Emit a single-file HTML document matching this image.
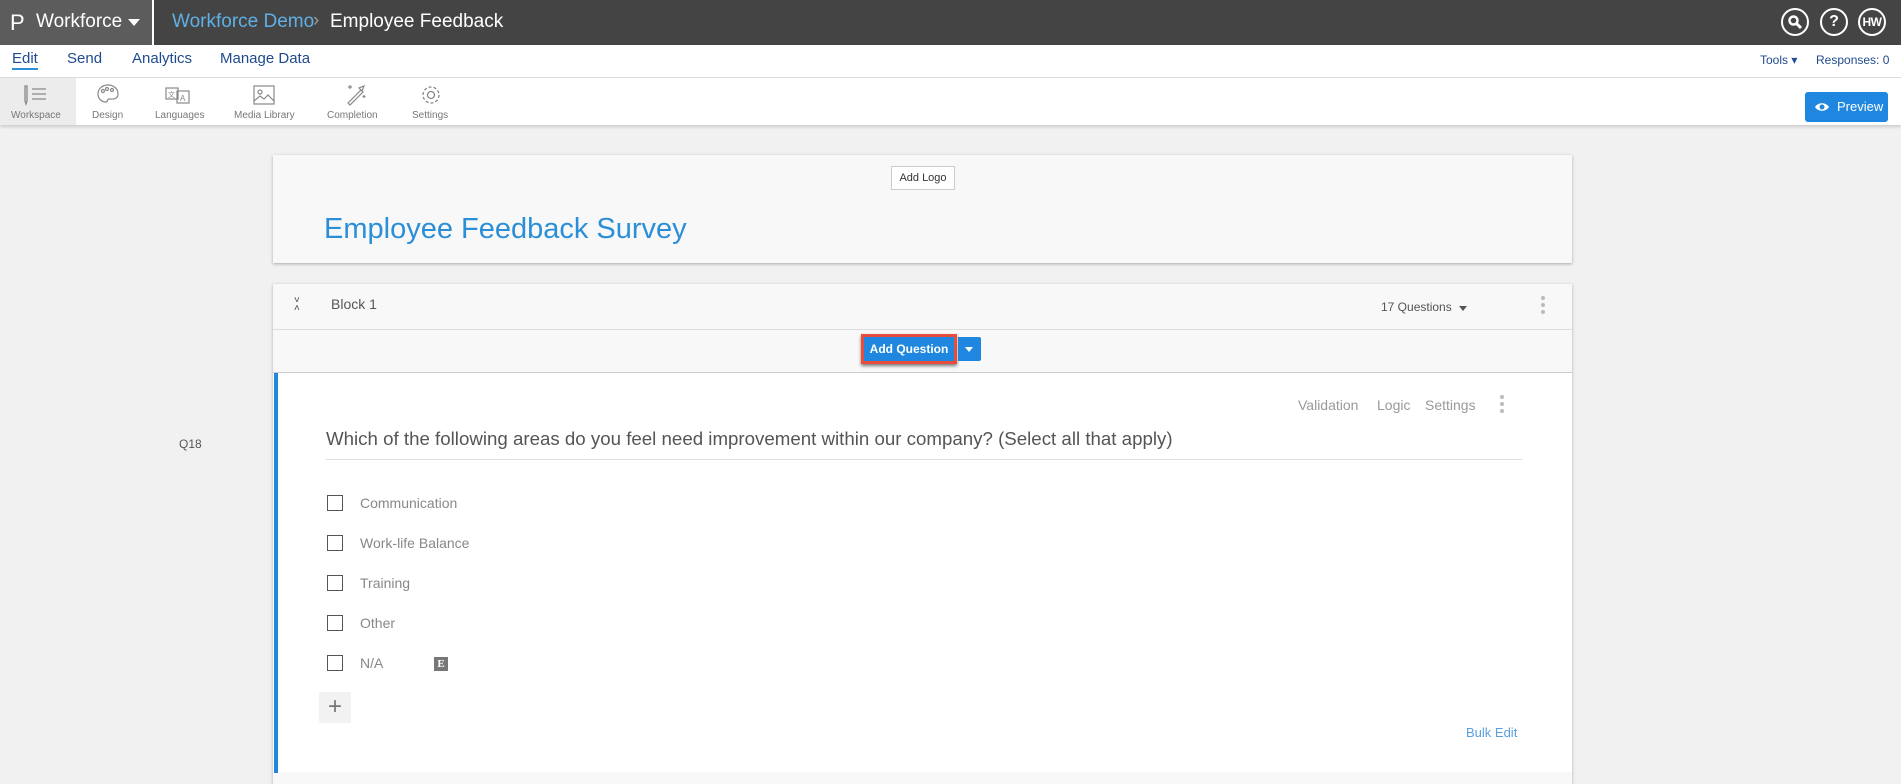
<!DOCTYPE html>
<html><head><meta charset="utf-8"><style>
*{margin:0;padding:0;box-sizing:border-box}
body{width:1901px;height:764px;overflow:hidden;background:#f1f1f1;font-family:"Liberation Sans",sans-serif;position:relative}
.a{position:absolute;white-space:nowrap}
</style></head><body>
<!-- top bar -->
<div class="a" style="left:0;top:0;width:1901px;height:45px;background:#444"></div>
<div class="a" style="left:0;top:0;width:154px;height:45px;background:#5c5c5c;border-right:2px solid #fff"></div>
<div class="a" style="left:10px;top:10px;font-size:22px;color:#fff">P</div>
<div class="a" style="left:36px;top:11px;font-size:19px;color:#fff">Workforce</div>
<div class="a" style="left:128px;top:19px;width:0;height:0;border-left:6px solid transparent;border-right:6px solid transparent;border-top:7px solid #fff"></div>
<div class="a" style="left:172px;top:11px;font-size:19px;color:#5fb0e6">Workforce Demo</div>
<div class="a" style="left:313px;top:10px;font-size:19px;color:#999">›</div>
<div class="a" style="left:330px;top:11px;font-size:19px;color:#fff">Employee Feedback</div>
<div class="a" style="left:1781px;top:8px;width:28px;height:28px;border:2px solid #fff;border-radius:50%"></div>
<svg class="a" style="left:1787px;top:14px" width="16" height="16"><circle cx="6.5" cy="6.5" r="4" stroke="#fff" stroke-width="2.5" fill="none"/><path d="M9.5 9.5 L14 14" stroke="#fff" stroke-width="3"/></svg>
<div class="a" style="left:1820px;top:8px;width:28px;height:28px;border:2px solid #fff;border-radius:50%;color:#fff;font-weight:bold;font-size:16px;text-align:center;line-height:24px">?</div>
<div class="a" style="left:1858px;top:8px;width:28px;height:28px;border:2px solid #fff;border-radius:50%;color:#fff;font-weight:bold;font-size:12px;text-align:center;line-height:24px;letter-spacing:-0.5px">HW</div>
<!-- nav -->
<div class="a" style="left:0;top:45px;width:1901px;height:33px;background:#fff;border-bottom:1px solid #ddd"></div>
<div class="a" style="left:12px;top:50px;font-size:15px;color:#1f4a8f;border-bottom:2px solid #2b8fd8;padding-bottom:1px">Edit</div>
<div class="a" style="left:67px;top:50px;font-size:15px;color:#1f4a8f">Send</div>
<div class="a" style="left:132px;top:50px;font-size:15px;color:#1f4a8f">Analytics</div>
<div class="a" style="left:220px;top:50px;font-size:15px;color:#1f4a8f">Manage Data</div>
<div class="a" style="left:1760px;top:53px;font-size:12px;color:#1f4a8f">Tools ▾</div>
<div class="a" style="left:1816px;top:53px;font-size:12px;color:#1f4a8f">Responses: 0</div>
<!-- toolbar -->
<div class="a" style="left:0;top:78px;width:1901px;height:47px;background:#fff;box-shadow:0 2px 3px rgba(0,0,0,.15)"></div>
<div class="a" style="left:0;top:78px;width:76px;height:47px;background:#ececec"></div>
<svg class="a" style="left:22px;top:84px" width="28" height="22" stroke="#888" fill="none" stroke-width="1.3"><path d="M3 2v15l1 3 1-3V2z M10 5h14 M10 10h14 M10 15h14"/></svg>
<svg class="a" style="left:96px;top:83px" width="24" height="22" stroke="#888" fill="none" stroke-width="1.2"><path d="M12 2C5 2 2 7 2 11c0 5 4 8 8 8 2 0 1-3 3-3 3 0 9 1 9-5 0-5-4-9-10-9z"/><circle cx="7" cy="8" r="1.5"/><circle cx="11" cy="6" r="1.5"/><circle cx="16" cy="7" r="1.5"/></svg>
<svg class="a" style="left:165px;top:85px" width="26" height="20" stroke="#888" fill="none" stroke-width="1.2"><rect x="1" y="3" width="12" height="11"/><rect x="12" y="6" width="12" height="12"/><text x="3" y="12" font-size="7" fill="#888" stroke="none">文</text><text x="15" y="16" font-size="8" fill="#888" stroke="none">A</text></svg>
<svg class="a" style="left:252px;top:84px" width="24" height="22" stroke="#888" fill="none" stroke-width="1.2"><rect x="2" y="2" width="20" height="18"/><circle cx="8" cy="8" r="2"/><path d="M2 17l6-5 4 3 4-4 6 6"/></svg>
<svg class="a" style="left:344px;top:82px" width="24" height="24" stroke="#888" fill="none" stroke-width="1.2"><path d="M4 21l13-13 2 2-13 13z M15 6l3 3 2-5z M6 3v4 M4 5h4 M20 13v3 M18.5 14.5h3"/></svg>
<svg class="a" style="left:419px;top:83px" width="24" height="24" stroke="#888" fill="none" stroke-width="1.3"><circle cx="12" cy="12" r="3.5"/><circle cx="12" cy="12" r="8" stroke-dasharray="3 2"/></svg>
<div class="a" style="left:11px;top:110px;font-size:10px;color:#777">Workspace</div>
<div class="a" style="left:92px;top:110px;font-size:10px;color:#777">Design</div>
<div class="a" style="left:155px;top:110px;font-size:10px;color:#777">Languages</div>
<div class="a" style="left:234px;top:110px;font-size:10px;color:#777">Media Library</div>
<div class="a" style="left:327px;top:110px;font-size:10px;color:#777">Completion</div>
<div class="a" style="left:412px;top:110px;font-size:10px;color:#777">Settings</div>
<div class="a" style="left:1805px;top:92px;width:83px;height:30px;background:#1f87e0;border-radius:3px;color:#fff;font-size:13px;line-height:30px;padding-left:32px">Preview</div>
<svg class="a" style="left:1814px;top:101px" width="16" height="12"><path d="M1 6C4 1 12 1 15 6 12 11 4 11 1 6z" fill="#fff"/><circle cx="8" cy="6" r="2.5" fill="#1f87e0"/></svg>
<!-- header card -->
<div class="a" style="left:273px;top:155px;width:1299px;height:108px;background:#f8f8f8;box-shadow:0 1px 3px rgba(0,0,0,.3)"></div>
<div class="a" style="left:891px;top:166px;width:64px;height:24px;background:#fff;border:1px solid #ccc;font-size:11px;color:#333;text-align:center;line-height:22px">Add Logo</div>
<div class="a" style="left:324px;top:213px;font-size:29px;color:#2b8fd8">Employee Feedback Survey</div>
<!-- block -->
<div class="a" style="left:273px;top:284px;width:1299px;height:500px;background:#f8f8f8;box-shadow:0 1px 3px rgba(0,0,0,.3)"></div>
<div class="a" style="left:273px;top:329px;width:1299px;height:1px;background:#ddd"></div>
<div class="a" style="left:294px;top:297px;font-size:10px;color:#444;line-height:8px">˅<br>˄</div>
<div class="a" style="left:331px;top:296px;font-size:14px;color:#555">Block 1</div>
<div class="a" style="left:1381px;top:300px;font-size:12px;color:#555">17 Questions</div>
<div class="a" style="left:1459px;top:306px;width:0;height:0;border-left:4px solid transparent;border-right:4px solid transparent;border-top:5px solid #555"></div>
<div class="a" style="left:1541px;top:296px;width:4px;line-height:6px;font-size:0">
<div style="width:4px;height:4px;border-radius:50%;background:#bbb;margin-bottom:3px"></div><div style="width:4px;height:4px;border-radius:50%;background:#bbb;margin-bottom:3px"></div><div style="width:4px;height:4px;border-radius:50%;background:#bbb"></div></div>
<div class="a" style="left:861px;top:334px;width:96px;height:30px;border:3px solid #e84c3d;box-shadow:0 2px 3px rgba(0,0,0,.5)"></div>
<div class="a" style="left:864px;top:337px;width:90px;height:24px;background:#1f87e0;color:#fff;font-size:12px;text-align:center;line-height:24px;font-weight:bold">Add Question</div>
<div class="a" style="left:958px;top:337px;width:23px;height:24px;background:#1f87e0;border-radius:0 2px 2px 0"></div>
<div class="a" style="left:965px;top:347px;width:0;height:0;border-left:4.5px solid transparent;border-right:4.5px solid transparent;border-top:5px solid #fff"></div>
<!-- question -->
<div class="a" style="left:273px;top:372px;width:1299px;height:400px;background:#fff;border-top:1px solid #ccc"></div>
<div class="a" style="left:274px;top:373px;width:4px;height:400px;background:#1f87e0"></div>
<div class="a" style="left:1298px;top:397px;font-size:14px;color:#999">Validation</div>
<div class="a" style="left:1377px;top:397px;font-size:14px;color:#999">Logic</div>
<div class="a" style="left:1425px;top:397px;font-size:14px;color:#999">Settings</div>
<div class="a" style="left:1500px;top:395px">
<div style="width:4px;height:4px;border-radius:50%;background:#bbb;margin-bottom:3px"></div><div style="width:4px;height:4px;border-radius:50%;background:#bbb;margin-bottom:3px"></div><div style="width:4px;height:4px;border-radius:50%;background:#bbb"></div></div>
<div class="a" style="left:179px;top:437px;font-size:12px;color:#555">Q18</div>
<div class="a" style="left:326px;top:428px;font-size:18.7px;color:#555">Which of the following areas do you feel need improvement within our company? (Select all that apply)</div>
<div class="a" style="left:326px;top:459px;width:1196px;height:1px;background:#e0e0e0"></div>
<div class="a" style="left:327px;top:495px;width:16px;height:16px;border:1.5px solid #555"></div>
<div class="a" style="left:360px;top:495px;font-size:14px;color:#888">Communication</div>
<div class="a" style="left:327px;top:535px;width:16px;height:16px;border:1.5px solid #555"></div>
<div class="a" style="left:360px;top:535px;font-size:14px;color:#888">Work-life Balance</div>
<div class="a" style="left:327px;top:575px;width:16px;height:16px;border:1.5px solid #555"></div>
<div class="a" style="left:360px;top:575px;font-size:14px;color:#888">Training</div>
<div class="a" style="left:327px;top:615px;width:16px;height:16px;border:1.5px solid #555"></div>
<div class="a" style="left:360px;top:615px;font-size:14px;color:#888">Other</div>
<div class="a" style="left:327px;top:655px;width:16px;height:16px;border:1.5px solid #555"></div>
<div class="a" style="left:360px;top:655px;font-size:14px;color:#888">N/A</div>
<div class="a" style="left:434px;top:657px;width:14px;height:14px;background:#777;color:#fff;font-size:11px;font-weight:bold;text-align:center;line-height:14px;font-family:'Liberation Serif',serif">E</div>
<div class="a" style="left:319px;top:692px;width:32px;height:31px;background:#f2f2f2;border-radius:2px;color:#777;font-size:24px;text-align:center;line-height:30px">+</div>
<div class="a" style="left:1466px;top:725px;font-size:13px;color:#5a9fe0">Bulk Edit</div>
</body></html>
